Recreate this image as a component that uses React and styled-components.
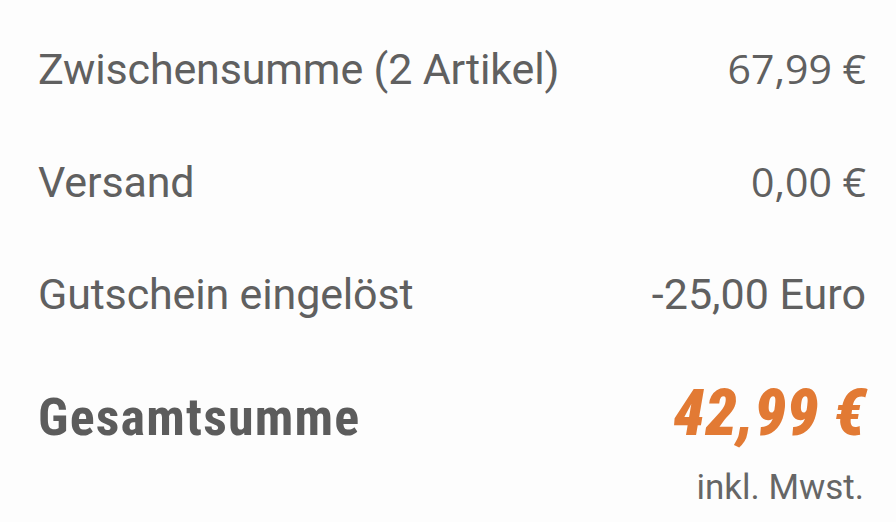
import styled, { createGlobalStyle } from "styled-components";

const GlobalStyle = createGlobalStyle`
  html, body {
    margin: 0;
    padding: 0;
    background: #fdfdfd;
  }
`;

const items = [
  { label: "Zwischensumme (2 Artikel)", value: "67,99 €", sans: true },
  { label: "Versand", value: "0,00 €", sans: true },
  { label: "Gutschein eingelöst", value: "-25,00 Euro", sans: false },
];

const App = () => {
  return (
    <>
      <GlobalStyle />
      <Summary>
        {items.map((item) => (
          <Row key={item.label}>
            <Label>{item.label}</Label>
            <Value $sans={item.sans}>{item.value}</Value>
          </Row>
        ))}
        <TotalRow>
          <TotalLabel>Gesamtsumme</TotalLabel>
          <TotalValue>42,99 €</TotalValue>
        </TotalRow>
        <Tax>inkl. Mwst.</Tax>
      </Summary>
    </>
  );
};

const Summary = styled.div`
  width: 896px;
  height: 522px;
  box-sizing: border-box;
  padding: 43px 30px 0 38px;
  display: flex;
  flex-direction: column;
  gap: 62px;
  font-family: Roboto, "Liberation Sans", sans-serif;
  color: #606060;
  overflow: hidden;
`;

const Row = styled.div`
  display: flex;
  justify-content: space-between;
  align-items: baseline;
  font-size: 43px;
  line-height: 50px;
`;

const Label = styled.span`
  font-weight: 400;
  letter-spacing: -0.15px;
`;

const Value = styled.span`
  font-family: ${(p) => (p.$sans ? `"Open Sans", "Noto Sans", sans-serif` : `Roboto, sans-serif`)};
  font-size: ${(p) => (p.$sans ? "41px" : "43px")};
`;

const TotalRow = styled.div`
  display: flex;
  justify-content: space-between;
  align-items: baseline;
  line-height: 60px;
  margin-top: 3px;
`;

const TotalLabel = styled.span`
  font-size: 52px;
  font-weight: 700;
  font-stretch: 75%;
  letter-spacing: 1.2px;
  color: #5c5c5c;
`;

const TotalValue = styled.span`
  font-size: 64px;
  font-weight: 900;
  font-style: italic;
  font-stretch: 75%;
  color: #e27a34;
  letter-spacing: 0.4px;
`;

const Tax = styled.div`
  margin-top: -40px;
  margin-right: 2px;
  align-self: flex-end;
  font-size: 35px;
  line-height: 36px;
  color: #666;
`;

export default App;
